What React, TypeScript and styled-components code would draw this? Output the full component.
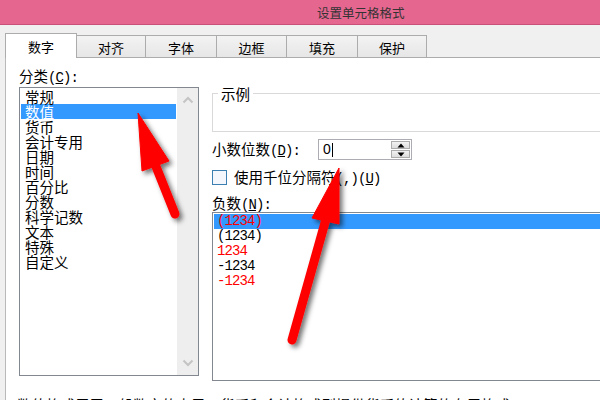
import React from "react";
import styled, { createGlobalStyle } from "styled-components";

const GlobalStyle = createGlobalStyle`
  html, body { margin: 0; padding: 0; background: #f0f0f0; }
  body { font-family: "Noto Sans CJK SC", "Noto Sans", sans-serif; color: #000; }
`;

const Window = styled.div`
  position: relative;
  width: 600px;
  height: 400px;
  overflow: hidden;
  background: #f0f0f0;
`;

const TitleBar = styled.div`
  height: 24px;
  background: #e5668f;
  border-bottom: 1px solid #c9507a;
  display: flex;
  align-items: center;
  padding-left: 317px;
  font-size: 12.5px;
  color: #333333;
`;

const TabStrip = styled.div`
  display: flex;
  align-items: flex-end;
  height: 32px;
  padding-left: 5px;
`;

const Tab = styled.div<{ $w: number; $active?: boolean }>`
  box-sizing: border-box;
  width: ${(p) => p.$w}px;
  height: ${(p) => (p.$active ? 25 : 22)}px;
  margin-bottom: ${(p) => (p.$active ? -1 : 0)}px;
  margin-left: ${(p) => (p.$active ? 0 : -1)}px;
  border: 1px solid #acacac;
  border-bottom: none;
  background: ${(p) =>
    p.$active ? "#ffffff" : "linear-gradient(#f3f3f3, #e6e6e6)"};
  position: relative;
  z-index: ${(p) => (p.$active ? 2 : 1)};
  display: flex;
  align-items: center;
  justify-content: center;
  padding-top: ${(p) => (p.$active ? 0 : 2)}px;
  font-size: 13px;
  line-height: 15px;
`;

const Panel = styled.div`
  margin-left: 5px;
  border-left: 1px solid #b9b9b9;
  border-top: 1px solid #acacac;
  background: #ffffff;
  height: 343px;
  font-size: 14.5px;
  line-height: 15px;
`;

const Body = styled.div`
  display: flex;
`;

const LeftCol = styled.div`
  width: 193px;
  padding-left: 13px;
  padding-top: 10px;
  box-sizing: border-box;
`;

const Label = styled.div`
  height: 15px;
  line-height: 15px;
  white-space: nowrap;
`;

const Ascii = styled.span`
  font-family: "Liberation Mono", monospace;
  font-size: 14px;
  letter-spacing: -0.9px;
`;

const Key = styled.u`
  text-underline-offset: 1px;
`;

const CategoryList = styled.div`
  box-sizing: border-box;
  margin-top: 4px;
  width: 180px;
  height: 289px;
  border: 1px solid #828790;
  display: flex;
`;

const Items = styled.div`
  flex: 1;
  padding: 1px;
`;

const Item = styled.div<{ $selected?: boolean }>`
  height: 15px;
  line-height: 15px;
  padding-left: 4px;
  white-space: nowrap;
  background: ${(p) => (p.$selected ? "#3399ff" : "transparent")};
  color: ${(p) => (p.$selected ? "#ffffff" : "#000000")};
`;

const ScrollBar = styled.div`
  width: 21px;
  background: #eeeeee;
  display: flex;
  flex-direction: column;
  justify-content: space-between;
  align-items: center;
  padding: 8px 0;
`;

const RightCol = styled.div`
  margin-left: 13px;
  padding-top: 35px;
  flex: 1;
`;

const Sample = styled.div`
  position: relative;
  box-sizing: border-box;
  width: 420px;
  height: 39px;
  border: 1px solid #d9d9d9;
`;

const Legend = styled.span`
  position: absolute;
  top: -8px;
  left: 5px;
  padding: 0 3px;
  background: #ffffff;
  line-height: 15px;
`;

const DecimalRow = styled.div`
  margin-top: 7px;
  display: flex;
  align-items: center;
  height: 21px;
`;

const DecimalLabel = styled.div`
  width: 106px;
  white-space: nowrap;
`;

const SpinInput = styled.div`
  box-sizing: border-box;
  width: 94px;
  height: 21px;
  border: 1px solid #abadb3;
  display: flex;
  align-items: center;
  padding-left: 4px;
`;

const Value = styled.span`
  font-family: "Liberation Sans", sans-serif;
  font-size: 14px;
`;

const Caret = styled.span`
  width: 1px;
  height: 14px;
  background: #000;
  margin-left: 1px;
`;

const Spinner = styled.div`
  margin-left: auto;
  margin-right: 1px;
  width: 19px;
  height: 17px;
  display: flex;
  flex-direction: column;
  gap: 1px;
`;

const SpinButton = styled.div`
  box-sizing: border-box;
  flex: 1;
  border: 1px solid #acacac;
  background: linear-gradient(#f2f2f2, #dcdcdc);
  display: flex;
  align-items: center;
  justify-content: center;
`;

const CheckRow = styled.div`
  margin-top: 10px;
  display: flex;
  align-items: center;
  height: 15px;
`;

const CheckBox = styled.div`
  box-sizing: border-box;
  width: 15px;
  height: 15px;
  border: 1px solid #3c7fb1;
  background: #f4f8fd;
`;

const CheckLabel = styled.span`
  margin-left: 7px;
  white-space: nowrap;
`;

const NegLabel = styled(Label)`
  margin-top: 10px;
`;

const NegList = styled.div`
  box-sizing: border-box;
  margin-top: 2px;
  width: 420px;
  height: 169px;
  border: 1px solid #828790;
  padding: 1px;
`;

const NegItem = styled.div<{ $red?: boolean; $selected?: boolean }>`
  height: 15px;
  line-height: 15px;
  padding-left: 3px;
  font-family: "Liberation Mono", monospace;
  font-size: 14px;
  letter-spacing: -0.9px;
  color: ${(p) => (p.$red ? "#ff0000" : "#000000")};
  background: ${(p) => (p.$selected ? "#3399ff" : "transparent")};
`;

const Description = styled.div`
  margin-top: 16px;
  padding-left: 11px;
  white-space: nowrap;
`;

const Overlay = styled.svg`
  position: absolute;
  left: 0;
  top: 0;
  pointer-events: none;
`;

const tabs = [
  { label: "数字", w: 72 },
  { label: "对齐", w: 70 },
  { label: "字体", w: 72 },
  { label: "边框", w: 71 },
  { label: "填充", w: 72 },
  { label: "保护", w: 70 },
];

const categories = [
  "常规",
  "数值",
  "货币",
  "会计专用",
  "日期",
  "时间",
  "百分比",
  "分数",
  "科学记数",
  "文本",
  "特殊",
  "自定义",
];

const negatives = [
  { t: "(1234)", red: true },
  { t: "(1234)", red: false },
  { t: "1234", red: true },
  { t: "-1234", red: false },
  { t: "-1234", red: true },
];

const Chevron = ({ up }: { up?: boolean }) => (
  <svg width="12" height="8" viewBox="0 0 12 8">
    <path
      d={up ? "M1.5 6.5 L6 2 L10.5 6.5" : "M1.5 1.5 L6 6 L10.5 1.5"}
      fill="none"
      stroke="#c4c4c4"
      strokeWidth="2"
    />
  </svg>
);

const Tri = ({ up }: { up?: boolean }) => (
  <svg width="8" height="5" viewBox="0 0 8 5">
    <path d={up ? "M0.5 4.5 L4 0.5 L7.5 4.5Z" : "M0.5 0.5 L4 4.5 L7.5 0.5Z"} fill="#000" />
  </svg>
);

export default function App() {
  return (
    <Window>
      <GlobalStyle />
      <TitleBar>设置单元格格式</TitleBar>
      <TabStrip>
        {tabs.map((t, i) => (
          <Tab key={t.label} $w={t.w} $active={i === 0}>
            {t.label}
          </Tab>
        ))}
      </TabStrip>
      <Panel>
        <Body>
          <LeftCol>
            <Label>
              分类<Ascii>(<Key>C</Key>): </Ascii>
            </Label>
            <CategoryList>
              <Items>
                {categories.map((c) => (
                  <Item key={c} $selected={c === "数值"}>
                    {c}
                  </Item>
                ))}
              </Items>
              <ScrollBar>
                <Chevron up />
                <Chevron />
              </ScrollBar>
            </CategoryList>
          </LeftCol>
          <RightCol>
            <Sample>
              <Legend>示例</Legend>
            </Sample>
            <DecimalRow>
              <DecimalLabel>
                小数位数<Ascii>(<Key>D</Key>): </Ascii>
              </DecimalLabel>
              <SpinInput>
                <Value>0</Value>
                <Caret />
                <Spinner>
                  <SpinButton>
                    <Tri up />
                  </SpinButton>
                  <SpinButton>
                    <Tri />
                  </SpinButton>
                </Spinner>
              </SpinInput>
            </DecimalRow>
            <CheckRow>
              <CheckBox />
              <CheckLabel>
                使用千位分隔符<Ascii>(,)(<Key>U</Key>)</Ascii>
              </CheckLabel>
            </CheckRow>
            <NegLabel>
              负数<Ascii>(<Key>N</Key>): </Ascii>
            </NegLabel>
            <NegList>
              {negatives.map((n, i) => (
                <NegItem key={i} $red={n.red} $selected={i === 0}>
                  {n.t}
                </NegItem>
              ))}
            </NegList>
          </RightCol>
        </Body>
        <Description>数值格式用于一般数字的表示。货币和会计格式则提供货币值计算的专用格式。</Description>
      </Panel>
      <Overlay width="600" height="400" viewBox="0 0 600 400">
        <defs>
          <filter id="arrowShadow" x="-50%" y="-50%" width="200%" height="200%">
            <feDropShadow dx="3" dy="3" stdDeviation="2.5" floodColor="#000" floodOpacity="0.55" />
          </filter>
        </defs>
        <g filter="url(#arrowShadow)" fill="#ff0000" stroke="#ff0000">
          <polygon points="138,113 142,171 169,161" strokeWidth="1" strokeLinejoin="round" />
          <line x1="155" y1="164" x2="175" y2="214" strokeWidth="9" strokeLinecap="round" />
          <polygon points="339,168 312,218 339,224" strokeWidth="1" strokeLinejoin="round" />
          <line x1="326" y1="219" x2="292" y2="340" strokeWidth="9" strokeLinecap="round" />
        </g>
      </Overlay>
    </Window>
  );
}
